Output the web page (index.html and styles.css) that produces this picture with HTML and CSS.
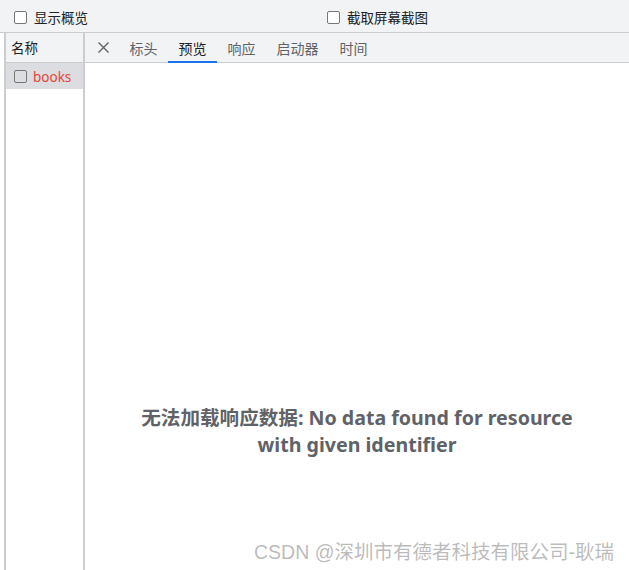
FILE: index.html
```html
<!DOCTYPE html>
<html lang="zh">
<head>
<meta charset="utf-8">
<link rel="stylesheet" href="styles.css">
</head>
<body>
<div class="toolbar">
  <label class="opt opt-first"><span class="cb"></span>显示概览</label>
  <label class="opt opt-second"><span class="cb"></span>截取屏幕截图</label>
</div>
<div class="main">
  <div class="sidebar">
    <div class="side-head">名称</div>
    <div class="row"><span class="cb"></span><span class="req">books</span></div>
  </div>
  <div class="content">
    <div class="tabs">
      <span class="close"><svg width="13" height="13" viewBox="0 0 13 13"><path d="M1.5 1.5 L11.5 11.5 M11.5 1.5 L1.5 11.5" stroke="#5f6368" stroke-width="1.4" fill="none"/></svg></span>
      <span class="tab">标头</span>
      <span class="tab active">预览</span>
      <span class="tab">响应</span>
      <span class="tab">启动器</span>
      <span class="tab">时间</span>
    </div>
    <div class="empty">
      <div class="msg">无法加载响应数据: No data found for resource<br>with given identifier</div>
    </div>
  </div>
</div>
<div class="watermark">CSDN @深圳市有德者科技有限公司-耿瑞</div>
</body>
</html>
```
FILE: styles.css
```css
html, body {
  margin: 0;
  padding: 0;
  background: #fff;
  height: 100%;
  overflow: hidden;
}
body {
  font-family: "Noto Sans", "Noto Sans CJK SC", sans-serif;
  font-size: 13.5px;
  color: #202124;
  position: relative;
}
.toolbar {
  background: #f1f3f4;
  border-bottom: 1px solid #cbcdd1;
  display: flex;
  align-items: center;
  padding-top: 3px;
  box-sizing: border-box;
  height: 33px;
}
.opt {
  display: flex;
  align-items: center;
  line-height: 16px;
}
.opt-first {
  margin-left: 14px;
}
.opt-second {
  margin-left: 239px;
}
.cb {
  display: inline-block;
  width: 11px;
  height: 11px;
  border: 1px solid #767676;
  border-radius: 2px;
  background: #fff;
  margin-right: 7px;
  flex: none;
}
.main {
  display: flex;
  padding-left: 4px;
  height: 537px;
}
.sidebar {
  width: 77px;
  border-left: 2px solid #cbcdd1;
  border-right: 2px solid #cbcdd1;
  flex: none;
}
.side-head {
  height: 29px;
  line-height: 30px;
  background: #f1f3f4;
  border-bottom: 1px solid #cbcdd1;
  padding-left: 5px;
}
.row {
  height: 26px;
  background: #dcdde0;
  display: flex;
  align-items: center;
  padding-left: 8px;
  padding-top: 1px;
  box-sizing: border-box;
}
.row .cb {
  background: transparent;
  margin-right: 6px;
}
.req {
  color: #e8453c;
}
.content {
  flex: 1;
  display: flex;
  flex-direction: column;
}
.tabs {
  height: 29px;
  background: #f1f3f4;
  border-bottom: 1px solid #cbcdd1;
  display: flex;
  align-items: stretch;
  padding-left: 12px;
  font-size: 14px;
}
.close {
  display: flex;
  align-items: center;
  width: 13px;
  margin-right: 9px;
}
.close svg {
  display: block;
}
.tab {
  display: flex;
  align-items: center;
  padding: 1px 10.5px 0 10.5px;
  color: #5f6368;
  box-sizing: border-box;
  border-bottom: 2px solid transparent;
  margin-bottom: -1px;
}
.tab.active {
  color: #202124;
  border-bottom-color: #1a73e8;
}
.empty {
  flex: 1;
  display: flex;
  justify-content: center;
  padding-top: 341px;
}
.msg {
  font-size: 19.6px;
  font-weight: bold;
  color: #5f6368;
  text-align: center;
  line-height: 27px;
}
.watermark {
  position: absolute;
  right: 15px;
  top: 540px;
  font-size: 19.5px;
  line-height: 24px;
  color: rgba(120, 120, 120, 0.5);
  font-family: "Liberation Sans", "Noto Sans CJK SC", sans-serif;
}
```
